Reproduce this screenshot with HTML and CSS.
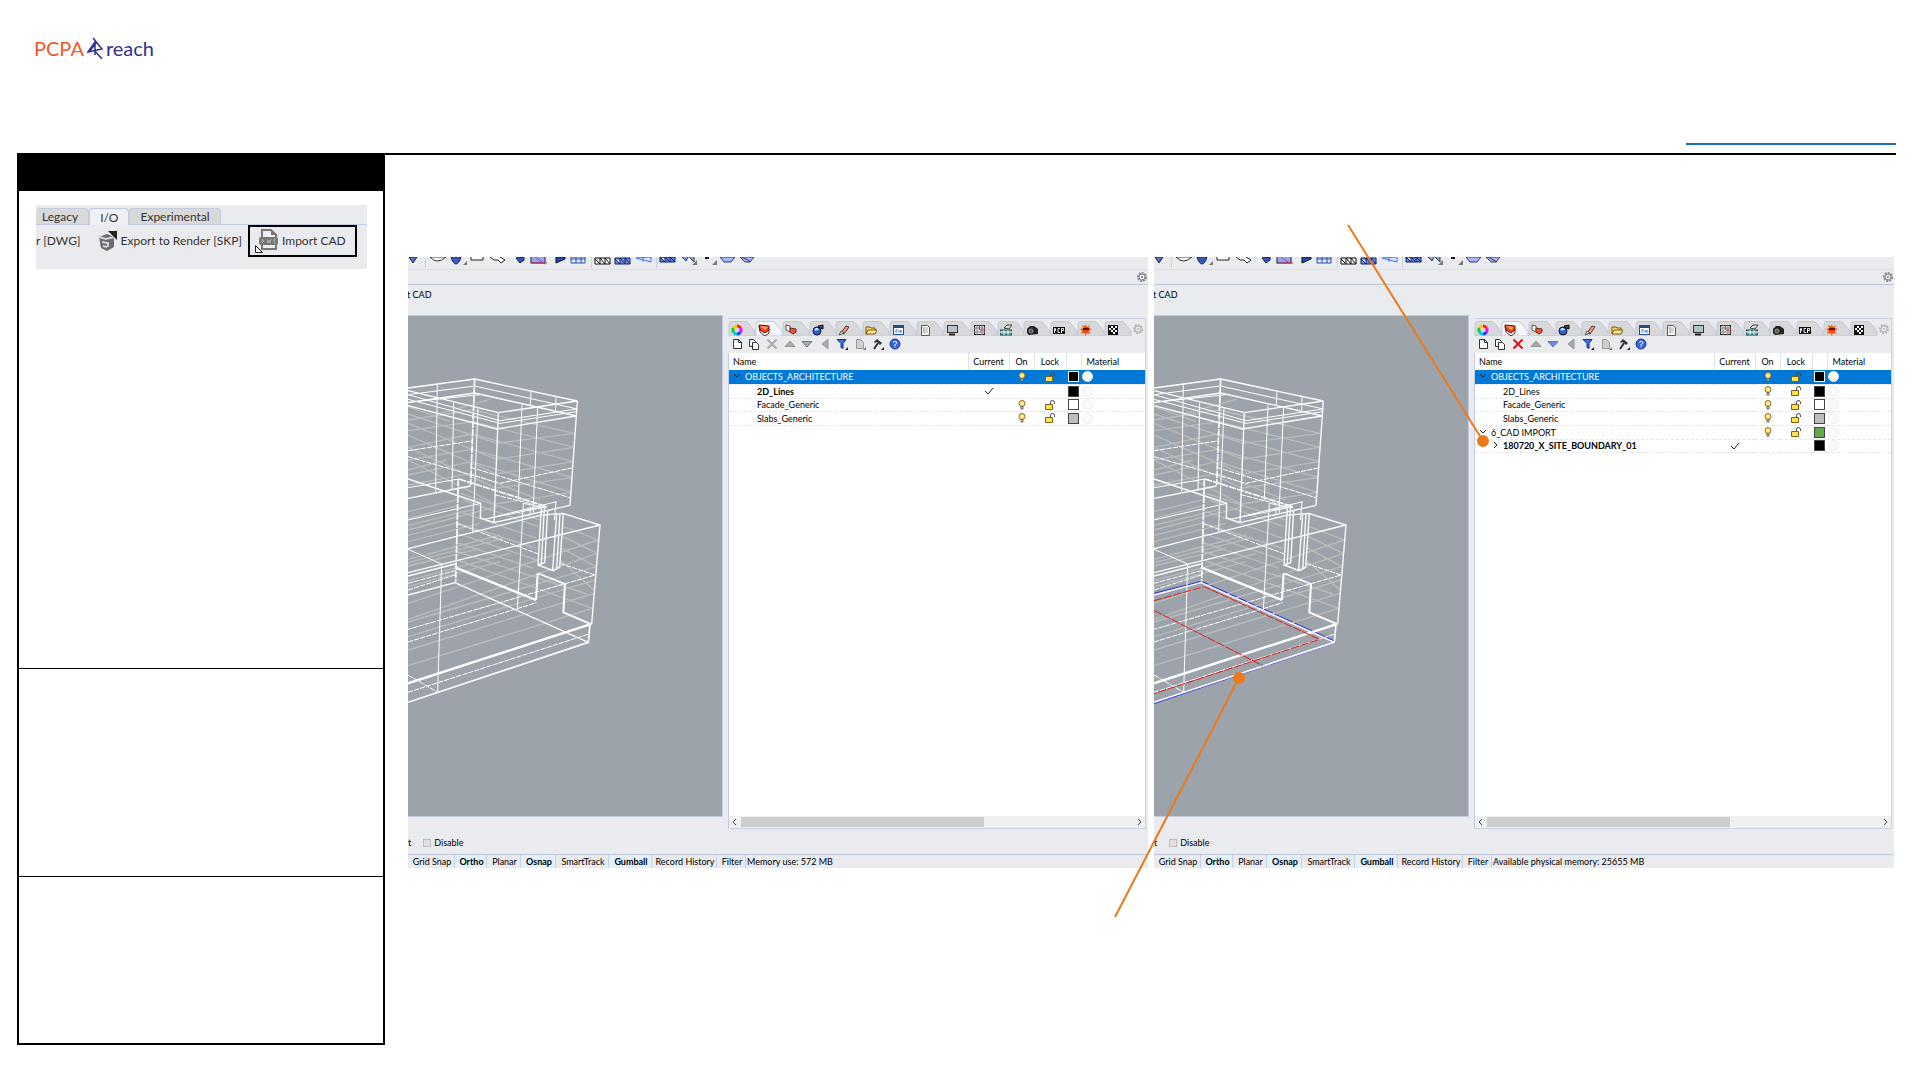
FILE: index.html
```html
<!DOCTYPE html>
<html lang="en">
<head>
<meta charset="utf-8">
<title>PCPA reach – Import CAD</title>
<link rel="stylesheet" href="styles.css">
</head>
<body>
<svg class="defs" aria-hidden="true">
<defs>
<symbol id="wire" viewBox="24 -132 945 1500">
<g fill="none" stroke="#bcbcbc" stroke-width="4">
<path d="M24 180L218 150L522 220M24 212L218 185L522 262M24 262L216 222L520 305M24 300L216 268L518 353M24 345L215 305L515 397M24 375L214 340L420 420"/>
<path d="M24 162L292 250L522 220M24 190L290 298L522 262M24 225L290 342L520 305M24 262L288 384L518 353M24 300L286 432L515 397M120 160L270 118M24 140L150 185M24 330L140 300"/>
<path d="M24 455L175 418M24 476L175 436M24 496L220 448M24 510L290 440M24 526L175 488M24 545L240 490M24 598L300 525M24 608L310 535M24 618L240 566M24 662L330 580M24 680L300 605"/>
<path d="M180 400L420 480M190 420L415 500M180 455L410 535M175 490L410 565M172 520L410 600M172 548L400 625M172 575L560 702M172 600L578 745M490 500L595 540M488 530L592 580M486 565L588 620M480 600L582 690"/>
<path d="M24 730L595 540M24 778L592 580M24 786L588 620M24 830L585 660M24 870L582 700M24 917L578 745"/>
</g>
<g fill="none" stroke="#fff" stroke-width="3">
<path stroke-width="4" d="M24 84L224 57L532 123M24 128L224 99L530 168M24 92L295 158L532 123M24 137L290 207L528 168M295 158L282 488M532 123L510 436M24 415L212 378M24 357L242 430L241 474L282 488L510 436"/>
<path d="M24 104L224 78L532 147M24 104L300 182L530 147M24 118L300 190L530 155M24 127L240 104"/>
<path stroke-width="5" stroke-dasharray="22 3" d="M224 57L212 375M177 357L440 440M175 357L167 665"/>
<path d="M112 70L107 395M161 128L156 390M234 145L222 435M393 92L391 135M468 110L467 150M366 135L355 420M413 140L400 440M220 437L218 520M370 430L352 750M468 425L463 480"/>
<path stroke-dasharray="16 3" d="M24 272L215 243M24 290L300 370L515 324M212 322L510 413M284 404L400 433M170 490L415 582M480 610L585 645L24 808M24 846L410 728M24 997L567 822M24 945L113 997M24 670L165 632M24 690L165 645"/>
<path d="M24 383L177 357M24 480L242 430M252 478L440 440M270 474L470 425M370 430L440 444M370 450L440 440M390 440V462M400 440V458"/>
<path stroke-width="4" d="M24 566L420 466L488 460L600 495L575 792M24 638L600 495M24 648L165 612M24 705L165 668L565 847"/>
<path d="M24 568L125 612L113 997"/>
<path stroke-width="4" d="M424 445L414 615L460 632L479 622L490 460M433 445L424 610M443 450L434 610M470 462L458 630M480 460L470 628M414 615L434 608"/>
<path stroke-width="7" d="M165 622L408 720M24 970L570 793"/>
<path stroke-width="6" d="M408 720L413 640M495 672L490 757L575 793"/>
<path stroke-width="5" d="M413 640L495 672M570 793L565 847L24 1027"/>
</g>
</symbol>
<symbol id="ribbon" viewBox="0 0 228 12">
<g stroke-width="1">
<path d="M1 0h8l-4 6z" fill="#5a70c8" stroke="#223"/>
<path d="M17.500 0v11M183.500 0v11" stroke="#cfd3de"/>
<path d="M22 0q7 8 16 0z" fill="#fff" stroke="#333"/>
<path d="M43 0h10q-2 7-5 7t-5-7z" fill="#3b57b5" stroke="#1c2a66"/>
<path d="M59 4v4h-4z" fill="#777"/>
<path d="M63 0v3h12V0M82 0l4 3h4l3 3 4-3-5-3" fill="#fff" stroke="#222"/>
<path d="M108 1l4 5 4-3V0z" fill="#3452c0" stroke="#161e40"/>
<rect x="123" y="-5" width="14" height="11" fill="#98a4f2" stroke="#222"/><path d="M123 6h16M127 0l10 7" stroke="#c33b70"/>
<path d="M148 0v6l9-4V0z" fill="#2947b8" stroke="#111"/>
<path d="M163 0h14v6h-14zM163 2h14M168 0v6M173 0v6" fill="#dfe8ff" stroke="#2553a5"/>
<path d="M187 1h15v6h-15zM187 2l5 5V1l5 6V1l5 6" fill="#fff" stroke="#111"/>
<path d="M207 1h15v6h-15zM207 2l5 5V1l5 6V1l5 6" fill="#6f93f5" stroke="#10205c"/>
</g>
</symbol>
<symbol id="ribbon-end" viewBox="0 0 128 12">
<path d="M0 1l15 4V0zM7 0v5" fill="#d6e2ff" stroke="#4b76e2"/>
<path d="M20.500 0v11" stroke="#cfd3de"/>
<path d="M24 0h15v5H24zM24 0l5 5V0l5 5V0l5 5" fill="#5f83e8" stroke="#10205c"/>
<path d="M46 0l4 4 2-4M53 0l5 5V0" fill="#7f9af0" stroke="#345"/>
<path d="M61 3v5h-5zM81 3v5h-5z" fill="#777"/><path d="M69 1h4" stroke="#111" stroke-width="2"/>
<path d="M84 0l4 5h7l4-5zM104 0l5 5h5l4-5z" fill="#a9b6ff" stroke="#333a66"/><path d="M106 0l9 5" stroke="#333a66"/>
</symbol>
<symbol id="gear" viewBox="0 0 12 12"><circle cx="6" cy="6" r="4" fill="none" stroke="currentColor" stroke-width="2" stroke-dasharray="2 1"/><circle cx="6" cy="6" r="3" fill="none" stroke="currentColor"/><circle cx="6" cy="6" r="1" fill="currentColor"/></symbol>
<symbol id="t-wheel" viewBox="0 0 12 12"><g fill="none" stroke-width="3"><path stroke="#f22" d="M6 2A4 4 0 0 1 9.500 4"/><path stroke="#f0f" d="M9.500 4A4 4 0 0 1 9.500 8"/><path stroke="#33f" d="M9.500 8A4 4 0 0 1 6 10"/><path stroke="#0cd" d="M6 10A4 4 0 0 1 2.500 8"/><path stroke="#1c2" d="M2.500 8A4 4 0 0 1 2.500 4"/><path stroke="#fc0" d="M2.500 4A4 4 0 0 1 6 2"/></g></symbol>
<symbol id="t-layers" viewBox="0 0 12 12"><path d="M1 2l1 6 5 4 4-3V5L7 8z" fill="#fff" stroke="#333"/><path d="M1 1l10 1v4L7 9 2 6z" fill="#f0441c" stroke="#611"/><path d="M2 2l8 1-3 3z" fill="#ff9f66"/></symbol>
<symbol id="t-object" viewBox="0 0 12 12"><path d="M1 1l4 1v6l-4-2z" fill="#fff" stroke="#555"/><path d="M5 4l6 1v3l-3 2-3-2z" fill="#ee5a30" stroke="#722"/></symbol>
<symbol id="t-env" viewBox="0 0 12 12"><circle cx="5" cy="7" r="4" fill="#2c5fd0" stroke="#112"/><path d="M3 6q2-2 3 0" stroke="#dff" stroke-width="2" fill="none"/><path d="M6 2l5-1v4L8 4z" fill="#345" stroke="#111"/></symbol>
<symbol id="t-brush" viewBox="0 0 12 12"><path d="M3 9l5-7 3 1-5 7z" fill="#f49b70" stroke="#533"/><path d="M1 11l2-4 3 2z" fill="#eee" stroke="#555"/></symbol>
<symbol id="t-folder" viewBox="0 0 12 12"><path d="M1 10V3h4l1 1h4v2" fill="#ffd75e" stroke="#765212"/><path d="M1 10l2-4h9l-2 4z" fill="#ffe995" stroke="#765212"/></symbol>
<symbol id="t-browser" viewBox="0 0 12 12"><rect x="1.500" y="1.500" width="10" height="9" fill="#fff" stroke="#234b96"/><path d="M1 3h11" stroke="#234b96" stroke-width="2"/><path d="M4 9V6q0-1 1.500 0T7 8t2-2v3" fill="none" stroke="#3c70e8"/></symbol>
<symbol id="t-doc" viewBox="0 0 12 12"><path d="M2.500 1.500h6l2 2v8h-8z" fill="#fff" stroke="#555"/><path d="M4 4h5M4 6h5M4 8h5M5 3v7" stroke="#aaa"/></symbol>
<symbol id="t-display" viewBox="0 0 12 12"><rect x="1.500" y="1.500" width="10" height="7" fill="#b9c2c8" stroke="#333"/><path d="M3 10.500h6" stroke="#222" stroke-width="2"/></symbol>
<symbol id="t-grid" viewBox="0 0 12 12"><rect x="1.500" y="1.500" width="10" height="9" fill="#d9e0d9" stroke="#222"/><path d="M1 4h11M1 8h11M4 1v10M9 1v10" stroke="#889"/><path d="M7 6h5" stroke="#d33"/><path d="M6.500 1v5" stroke="#393"/></symbol>
<symbol id="t-plane" viewBox="0 0 12 12"><path d="M0 6h12v5H0z" fill="#62a69b" stroke="#245"/><path d="M0 8h12M4 6v5M8 6v5" stroke="#dff"/><path d="M4 4l3-3h5l-3 4z" fill="#ddd" stroke="#444"/></symbol>
<symbol id="t-camera" viewBox="0 0 12 12"><path d="M1 5l3-3h4l4 3v5l-9 1-2-2z" fill="#222"/><circle cx="5" cy="7" r="2" fill="#555" stroke="#999"/></symbol>
<symbol id="t-rcp" viewBox="0 0 12 12"><path d="M0 3h12v7H0z" fill="#111"/><path d="M1.500 9V4.500h1v2h-1M7 4.500H5v4h2M8.500 9V4.500h2v2h-2" fill="none" stroke="#eee"/></symbol>
<symbol id="t-sun" viewBox="0 0 12 12"><path d="M6 0l1 3 3-2-1 3 3 1-3 2 2 3-4-1-1 3-2-3-3 1 1-3-2-2 3-1-1-3 3 1z" fill="#e96b1a"/><circle cx="6" cy="6" r="3" fill="#f0401c"/><path d="M3 5h6" stroke="#611" stroke-width="2"/></symbol>
<symbol id="t-check" viewBox="0 0 12 12"><path d="M1 1h10v10H1z" fill="#111"/><path d="M4 2h2v2H4zM8 2h2v2H8zM6 4h2v2H6zM4 6h2v2H4zM2 4h2v2H2zM8 6h2v2H8zM6 8h2v2H6z" fill="#fff"/></symbol>
<symbol id="b-new" viewBox="0 0 12 12"><path d="M2.500 1.500h5l3 3v6h-8z" fill="#fff" stroke="#333"/><path d="M7.500 1v3.500H11" fill="none" stroke="#333"/></symbol>
<symbol id="b-copy" viewBox="0 0 12 12"><path d="M1.500 1.500h4l2 2v5h-6z" fill="#fff" stroke="#333"/><path d="M4.500 4.500h4l2 2v5h-6z" fill="#fff" stroke="#333"/></symbol>
<symbol id="b-x" viewBox="0 0 12 12"><path d="M1.500 1.500l9 9M10.500 1.500l-9 9" stroke="currentColor" stroke-width="2"/></symbol>
<symbol id="b-up" viewBox="0 0 12 12"><path d="M1 8.500L6 3l5 5.500z" fill="#aaa" stroke="#999"/></symbol>
<symbol id="b-down" viewBox="0 0 12 12"><path d="M1 3.500L6 9l5-5.500z" fill="currentColor" stroke="#777"/></symbol>
<symbol id="b-left" viewBox="0 0 12 12"><path d="M9 1L3 6l6 5z" fill="#aaa" stroke="#999"/></symbol>
<symbol id="b-filter" viewBox="0 0 12 12"><path d="M1 1.500h9l-3 4v5l-2-1v-4z" fill="#3d6fe0" stroke="#1b2f75"/><path d="M12 9v3H9z" fill="#222"/></symbol>
<symbol id="b-page" viewBox="0 0 12 12"><path d="M2.500 1.500h4l3 3v6h-7z" fill="#d0d0d0" stroke="#999"/><path d="M12 9v3H9z" fill="#777"/></symbol>
<symbol id="b-hammer" viewBox="0 0 12 12"><path d="M2 4l3-3 5 4-2 2-3-3-2 1z" fill="#333"/><path d="M6 5l-4 6" stroke="#333" stroke-width="2"/><path d="M12 9v3H9z" fill="#222"/></symbol>
<symbol id="b-help" viewBox="0 0 12 12"><circle cx="6" cy="6" r="5" fill="#3565d8" stroke="#1d3c99"/><path d="M4 4.500q2-2.500 4 0Q8 6 6 6.500V8" fill="none" stroke="#fff"/><path d="M6 8.500v1" stroke="#fff"/></symbol>
<symbol id="bulb" viewBox="0 0 8 10"><circle cx="4" cy="3.500" r="3" fill="#ffe78a" stroke="#8a6a1c"/><path d="M3 6.500h2V9H3z" fill="#ddd" stroke="#665"/></symbol>
<symbol id="lock" viewBox="0 0 10 10"><path d="M5.500 5V2.500Q5.500 .5 7.500 .5T9.500 2.500V4" fill="none" stroke="#444"/><path d="M.5 4.500h7v5h-7z" fill="#ffe14d" stroke="#7a6212"/></symbol>
<symbol id="tick" viewBox="0 0 10 8"><path d="M1 4l3 3 5-6" fill="none" stroke="#222"/></symbol>
<symbol id="open" viewBox="0 0 6 6"><path d="M0 1l3 3 3-3" fill="none" stroke="currentColor"/></symbol>
<symbol id="closed" viewBox="0 0 6 6"><path d="M2 0l3 3-3 3" fill="none" stroke="currentColor"/></symbol>
<symbol id="layertabs" viewBox="0 0 27 15"><path d="M.5 15V3Q.5 .5 3 .5H17Q19 .5 20.500 3L26.500 10V15z" fill="currentColor" stroke="#c0c8dc"/></symbol>
</defs>
</svg>

<header class="masthead">
  <div class="brand">
    <span class="brand-pcpa">PCPA</span>
    <svg class="brand-mark" viewBox="0 0 16 22"><path d="M6 1L15 12L1 15L8 5V18M2 15L9 6M7 13l8 9" fill="none" stroke="#2e3191" stroke-width="1.500"/></svg>
    <span class="brand-reach">reach</span>
  </div>
  <a class="top-link" href="#" aria-label="Open link"></a>
</header>

<div class="sheet">
  <aside class="side">
    <div class="side-title"></div>
    <section class="side-tool">
      <div class="snippet">
        <div class="snip-tabs"><button class="snip-tab">Legacy</button><button class="snip-tab active">I/O</button><button class="snip-tab">Experimental</button></div>
        <div class="snip-row">
          <button class="snip-btn first">r [DWG]</button>
          <button class="snip-btn export"><svg width="21" height="22" viewBox="0 0 21 22"><path d="M2 7l8-3 7 3v10l-7 4-6-3z" fill="#6d6d6f"/><path d="M2 7l7 2 8-2M5 12l6 1v4M6 16l4 1" stroke="#d5d5d8" stroke-width="2" fill="none"/><path d="M11 1h9v9z" fill="#222"/></svg>Export to Render [SKP]</button>
          <button class="snip-btn import"><svg width="24" height="26" viewBox="0 0 24 26"><path d="M8 2h9l5 5v14H8z" fill="#eee" stroke="#777" stroke-width="2"/><path d="M17 2v5h5z" fill="#777"/><rect x="5" y="9" width="19" height="8" rx="2" fill="#777"/><path d="M8 11v4l2-2zM13 11l1 4 1-3 1 3 1-4M22 11h-2v4h2" fill="none" stroke="#aaa"/><path d="M1.500 17.500v7h7z" fill="#fff" stroke="#222"/></svg>Import CAD</button>
        </div>
      </div>
    </section>
    <section class="side-mid"></section>
    <section class="side-end"></section>
  </aside>

  <main class="shots">
    <figure class="shot">
      <div class="ribbon"><svg width="228" height="12"><use href="#ribbon"/></svg><svg width="128" height="12"><use href="#ribbon-end"/></svg></div>
      <div class="options"><svg width="12" height="12"><use href="#gear"/></svg></div>
      <div class="command">t CAD</div>
      <div class="work">
        <div class="viewport"><svg width="315" height="500"><use href="#wire"/></svg></div>
        <div class="panel">
          <div class="tabs">
            <button class="tab"><svg class="shape"><use href="#layertabs"/></svg><svg class="ico"><use href="#t-wheel"/></svg></button>
            <button class="tab active"><svg class="shape"><use href="#layertabs"/></svg><svg class="ico"><use href="#t-layers"/></svg></button>
            <button class="tab"><svg class="shape"><use href="#layertabs"/></svg><svg class="ico"><use href="#t-object"/></svg></button>
            <button class="tab"><svg class="shape"><use href="#layertabs"/></svg><svg class="ico"><use href="#t-env"/></svg></button>
            <button class="tab"><svg class="shape"><use href="#layertabs"/></svg><svg class="ico"><use href="#t-brush"/></svg></button>
            <button class="tab"><svg class="shape"><use href="#layertabs"/></svg><svg class="ico"><use href="#t-folder"/></svg></button>
            <button class="tab"><svg class="shape"><use href="#layertabs"/></svg><svg class="ico"><use href="#t-browser"/></svg></button>
            <button class="tab"><svg class="shape"><use href="#layertabs"/></svg><svg class="ico"><use href="#t-doc"/></svg></button>
            <button class="tab"><svg class="shape"><use href="#layertabs"/></svg><svg class="ico"><use href="#t-display"/></svg></button>
            <button class="tab"><svg class="shape"><use href="#layertabs"/></svg><svg class="ico"><use href="#t-grid"/></svg></button>
            <button class="tab"><svg class="shape"><use href="#layertabs"/></svg><svg class="ico"><use href="#t-plane"/></svg></button>
            <button class="tab"><svg class="shape"><use href="#layertabs"/></svg><svg class="ico"><use href="#t-camera"/></svg></button>
            <button class="tab"><svg class="shape"><use href="#layertabs"/></svg><svg class="ico"><use href="#t-rcp"/></svg></button>
            <button class="tab"><svg class="shape"><use href="#layertabs"/></svg><svg class="ico"><use href="#t-sun"/></svg></button>
            <button class="tab"><svg class="shape"><use href="#layertabs"/></svg><svg class="ico"><use href="#t-check"/></svg></button>
            <svg class="tab-gear"><use href="#gear"/></svg>
          </div>
          <div class="tools">
            <button class="tool"><svg><use href="#b-new"/></svg></button><button class="tool"><svg><use href="#b-copy"/></svg></button><button class="tool off"><svg><use href="#b-x"/></svg></button><button class="tool"><svg><use href="#b-up"/></svg></button><button class="tool off"><svg><use href="#b-down"/></svg></button><button class="tool"><svg><use href="#b-left"/></svg></button><button class="tool"><svg><use href="#b-filter"/></svg></button><button class="tool"><svg><use href="#b-page"/></svg></button><button class="tool"><svg><use href="#b-hammer"/></svg></button><button class="tool"><svg><use href="#b-help"/></svg></button>
          </div>
          <div class="list">
            <table class="layers">
              <thead><tr><th class="c-name">Name</th><th class="c-cur">Current</th><th class="c-on">On</th><th class="c-lock">Lock</th><th class="c-col"></th><th class="c-mat">Material</th></tr></thead>
              <tbody>
                <tr class="selected"><td class="root"><svg class="twist"><use href="#open"/></svg>OBJECTS_ARCHITECTURE</td><td></td><td><svg class="bulb"><use href="#bulb"/></svg></td><td><svg class="lock"><use href="#lock"/></svg></td><td><i class="swatch black"></i></td><td><i class="ball"></i></td></tr>
                <tr class="current"><td class="child">2D_Lines</td><td><svg class="tick"><use href="#tick"/></svg></td><td></td><td></td><td><i class="swatch black"></i></td><td><i class="ball"></i></td></tr>
                <tr><td class="child">Facade_Generic</td><td></td><td><svg class="bulb"><use href="#bulb"/></svg></td><td><svg class="lock"><use href="#lock"/></svg></td><td><i class="swatch"></i></td><td><i class="ball"></i></td></tr>
                <tr><td class="child">Slabs_Generic</td><td></td><td><svg class="bulb"><use href="#bulb"/></svg></td><td><svg class="lock"><use href="#lock"/></svg></td><td><i class="swatch gray"></i></td><td><i class="ball"></i></td></tr>
              </tbody>
            </table>
          </div>
          <div class="scroll"><svg class="arrow left"><use href="#closed"/></svg><div class="track"><div class="thumb"></div></div><svg class="arrow"><use href="#closed"/></svg></div>
        </div>
      </div>
      <div class="osnap"><span>t</span><label class="disable"><input type="checkbox">Disable</label></div>
      <div class="status"><button class="mode">Grid Snap</button><button class="mode on">Ortho</button><button class="mode">Planar</button><button class="mode on">Osnap</button><button class="mode">SmartTrack</button><button class="mode on">Gumball</button><button class="mode">Record History</button><button class="mode">Filter</button><span class="memory">Memory use: 572 MB</span></div>
    </figure>

    <figure class="shot">
      <div class="ribbon"><svg width="228" height="12"><use href="#ribbon"/></svg><svg width="128" height="12"><use href="#ribbon-end"/></svg></div>
      <div class="options"><svg width="12" height="12"><use href="#gear"/></svg></div>
      <div class="command">t CAD</div>
      <div class="work">
        <div class="viewport"><svg width="315" height="500" viewBox="24 -132 945 1500"><g fill="none" stroke-width="3"><path stroke="#2a2af0" d="M24 700L167 664L568 844"/><path stroke="#2a2af0" stroke-width="4" d="M568 847L24 1030"/></g><use href="#wire" x="24" y="-132" width="945" height="1500"/><path fill="none" stroke-width="3" stroke="#e21b1b" stroke-dasharray="26 4" d="M24 722L175 680L520 838L24 1001M24 751L350 917"/></svg></div>
        <div class="panel">
          <div class="tabs">
            <button class="tab"><svg class="shape"><use href="#layertabs"/></svg><svg class="ico"><use href="#t-wheel"/></svg></button>
            <button class="tab active"><svg class="shape"><use href="#layertabs"/></svg><svg class="ico"><use href="#t-layers"/></svg></button>
            <button class="tab"><svg class="shape"><use href="#layertabs"/></svg><svg class="ico"><use href="#t-object"/></svg></button>
            <button class="tab"><svg class="shape"><use href="#layertabs"/></svg><svg class="ico"><use href="#t-env"/></svg></button>
            <button class="tab"><svg class="shape"><use href="#layertabs"/></svg><svg class="ico"><use href="#t-brush"/></svg></button>
            <button class="tab"><svg class="shape"><use href="#layertabs"/></svg><svg class="ico"><use href="#t-folder"/></svg></button>
            <button class="tab"><svg class="shape"><use href="#layertabs"/></svg><svg class="ico"><use href="#t-browser"/></svg></button>
            <button class="tab"><svg class="shape"><use href="#layertabs"/></svg><svg class="ico"><use href="#t-doc"/></svg></button>
            <button class="tab"><svg class="shape"><use href="#layertabs"/></svg><svg class="ico"><use href="#t-display"/></svg></button>
            <button class="tab"><svg class="shape"><use href="#layertabs"/></svg><svg class="ico"><use href="#t-grid"/></svg></button>
            <button class="tab"><svg class="shape"><use href="#layertabs"/></svg><svg class="ico"><use href="#t-plane"/></svg></button>
            <button class="tab"><svg class="shape"><use href="#layertabs"/></svg><svg class="ico"><use href="#t-camera"/></svg></button>
            <button class="tab"><svg class="shape"><use href="#layertabs"/></svg><svg class="ico"><use href="#t-rcp"/></svg></button>
            <button class="tab"><svg class="shape"><use href="#layertabs"/></svg><svg class="ico"><use href="#t-sun"/></svg></button>
            <button class="tab"><svg class="shape"><use href="#layertabs"/></svg><svg class="ico"><use href="#t-check"/></svg></button>
            <svg class="tab-gear"><use href="#gear"/></svg>
          </div>
          <div class="tools">
            <button class="tool"><svg><use href="#b-new"/></svg></button><button class="tool"><svg><use href="#b-copy"/></svg></button><button class="tool delete"><svg><use href="#b-x"/></svg></button><button class="tool"><svg><use href="#b-up"/></svg></button><button class="tool down"><svg><use href="#b-down"/></svg></button><button class="tool"><svg><use href="#b-left"/></svg></button><button class="tool"><svg><use href="#b-filter"/></svg></button><button class="tool"><svg><use href="#b-page"/></svg></button><button class="tool"><svg><use href="#b-hammer"/></svg></button><button class="tool"><svg><use href="#b-help"/></svg></button>
          </div>
          <div class="list">
            <table class="layers">
              <thead><tr><th class="c-name">Name</th><th class="c-cur">Current</th><th class="c-on">On</th><th class="c-lock">Lock</th><th class="c-col"></th><th class="c-mat">Material</th></tr></thead>
              <tbody>
                <tr class="selected"><td class="root"><svg class="twist"><use href="#open"/></svg>OBJECTS_ARCHITECTURE</td><td></td><td><svg class="bulb"><use href="#bulb"/></svg></td><td><svg class="lock"><use href="#lock"/></svg></td><td><i class="swatch black"></i></td><td><i class="ball"></i></td></tr>
                <tr><td class="child">2D_Lines</td><td></td><td><svg class="bulb"><use href="#bulb"/></svg></td><td><svg class="lock"><use href="#lock"/></svg></td><td><i class="swatch black"></i></td><td><i class="ball"></i></td></tr>
                <tr><td class="child">Facade_Generic</td><td></td><td><svg class="bulb"><use href="#bulb"/></svg></td><td><svg class="lock"><use href="#lock"/></svg></td><td><i class="swatch"></i></td><td><i class="ball"></i></td></tr>
                <tr><td class="child">Slabs_Generic</td><td></td><td><svg class="bulb"><use href="#bulb"/></svg></td><td><svg class="lock"><use href="#lock"/></svg></td><td><i class="swatch gray"></i></td><td><i class="ball"></i></td></tr>
                <tr><td class="root"><svg class="twist"><use href="#open"/></svg>6_CAD IMPORT</td><td></td><td><svg class="bulb"><use href="#bulb"/></svg></td><td><svg class="lock"><use href="#lock"/></svg></td><td><i class="swatch green"></i></td><td><i class="ball"></i></td></tr>
                <tr class="current"><td class="nested"><svg class="twist"><use href="#closed"/></svg>180720_X_SITE_BOUNDARY_01</td><td><svg class="tick"><use href="#tick"/></svg></td><td></td><td></td><td><i class="swatch black"></i></td><td><i class="ball"></i></td></tr>
              </tbody>
            </table>
          </div>
          <div class="scroll"><svg class="arrow left"><use href="#closed"/></svg><div class="track"><div class="thumb"></div></div><svg class="arrow"><use href="#closed"/></svg></div>
        </div>
      </div>
      <div class="osnap"><span>t</span><label class="disable"><input type="checkbox">Disable</label></div>
      <div class="status"><button class="mode">Grid Snap</button><button class="mode on">Ortho</button><button class="mode">Planar</button><button class="mode on">Osnap</button><button class="mode">SmartTrack</button><button class="mode on">Gumball</button><button class="mode">Record History</button><button class="mode">Filter</button><span class="memory">Available physical memory: 25655 MB</span></div>
      <svg class="callouts" viewBox="0 0 400 611"><g stroke="#ec7a1c" stroke-width="2" fill="#ec7a1c"><path d="M194-32L329 184M-39 660L85 421"/><circle cx="329" cy="184" r="5"/><circle cx="85" cy="421" r="5"/></g></svg>
    </figure>
  </main>
</div>
</body>
</html>
```
FILE: styles.css
```css
* { box-sizing: border-box; }
body { margin: 0; background: #fff; color: #000; font-family: Lato, "Noto Sans", sans-serif; font-size: 9px; line-height: 12px; }
svg { display: block; flex: none; }
button { margin: 0; padding: 0; border: 0; background: none; color: inherit; font: inherit; white-space: nowrap; }
.defs { position: absolute; width: 0; height: 0; }

.masthead { display: flex; justify-content: space-between; align-items: flex-start; height: 153px; padding: 35px 24px 0 34px; }
.brand { display: flex; align-items: center; gap: 3px; height: 26px; font-size: 20px; line-height: 26px; }
.brand-pcpa { color: #ee5a2c; }
.brand-mark { width: 16px; height: 22px; }
.brand-reach { color: #2e3191; }
.top-link { width: 210px; height: 110px; border-bottom: 2px solid #1a6fc4; }

.sheet { display: flex; align-items: flex-start; margin: 0 24px 24px 17px; border-top: 2px solid #000; }
.side { flex: none; width: 368px; border: 2px solid #000; border-top: 0; }
.side-title { height: 36px; background: #000; }
.side-tool { height: 477px; padding: 14px 16px 0 17px; }
.side-mid { height: 208px; border-top: 1px solid #000; }
.side-end { height: 167px; border-top: 1px solid #000; }
.snippet { height: 64px; padding-top: 3px; background: #eaebef; color: #333; font-size: 12px; line-height: 16px; overflow: hidden; }
.snip-tabs { display: flex; height: 17px; border-bottom: 1px solid #c3cbe0; }
.snip-tab { height: 16px; padding: 0 10px; border: 1px solid #c3cbe0; border-bottom: 0; border-radius: 4px 4px 0 0; background: #d9d9da; line-height: 15px; }
.snip-tab:first-child { padding: 0 10px 0 6px; border-left: 0; }
.snip-tab.active { height: 17px; background: #eff0f5; }
.snip-row { display: flex; align-items: center; height: 32px; }
.snip-btn { display: flex; align-items: center; gap: 3px; }
.snip-btn.export { margin-left: 16px; }
.snip-btn.import { gap: 4px; width: 109px; height: 32px; margin-left: auto; margin-right: 10px; padding-left: 4px; border: 2px solid #000; }

.shots { flex: 1; display: grid; grid-template-columns: 1fr 1fr; gap: 6px; padding: 102px 2px 0 23px; min-width: 0; }
.shot { position: relative; margin: 0; min-width: 0; background: #eaebef; }
.ribbon { display: flex; height: 13px; border-bottom: 1px solid #dcdfe8; }
.options { display: flex; justify-content: flex-end; height: 15px; padding-top: 1px; border-bottom: 1px solid #bcc5da; color: #888; }
.command { height: 30px; padding-top: 4px; text-indent: -1px; overflow: hidden; }
.work { display: flex; }
.viewport { flex: none; width: 315px; height: 502px; border: solid #c3cbe0; border-width: 1px 1px 1px 0; background: #9ca3ab; overflow: hidden; }
.panel { flex: 1; display: flex; flex-direction: column; min-width: 0; height: 511px; margin: 3px 2px 0 5px; border: solid #c9d1e2; border-width: 1px 1px 1px 0; }
.tabs { display: flex; height: 17px; padding-top: 2px; overflow: hidden; }
.tab { position: relative; flex: 1; min-width: 0; height: 15px; color: #d8d8da; }
.tab.active { color: #f5f6fa; }
.tab .shape { position: absolute; top: 0; left: 0; width: 28px; height: 15px; }
.tab .ico { position: relative; width: 12px; height: 12px; margin: 2px 0 0 3px; }
.tab-gear { width: 14px; height: 12px; margin-top: 2px; color: #b5b5b5; }
.tools { display: flex; width: 176px; height: 17px; }
.tool { flex: 1; display: flex; justify-content: center; padding-top: 2px; min-width: 0; }
.tool svg { width: 12px; height: 12px; }
.off { color: #aaa; }
.delete { color: #d5151c; }
.down { color: #6a8cf5; }
.list { flex: 1; border-left: 1px solid #c3cbe0; background: #fff; }
.layers { width: 100%; border-collapse: collapse; table-layout: fixed; }
.layers th { height: 17px; padding: 0; border-right: 1px solid #e3e3e6; font-weight: 400; text-align: center; line-height: 16px; }
.layers .c-name { width: 239px; padding-left: 4px; text-align: left; }
.layers .c-cur { width: 41px; }
.layers .c-on { width: 25px; }
.layers .c-lock { width: 32px; }
.layers .c-col { width: 15px; }
.layers .c-mat { padding-left: 5px; border-right: 0; text-align: left; }
.layers td { height: 14px; padding: 0; border-bottom: 1px dashed #e6e6e8; line-height: 13px; white-space: nowrap; }
.layers tr:nth-child(3n) td { height: 13px; line-height: 12px; }
.layers td > svg { margin: 0 auto; }
.layers .root { padding-left: 5px; }
.layers .child { padding-left: 28px; }
.layers .nested { padding-left: 17px; }
.layers td > .twist { display: inline-block; width: 6px; height: 6px; margin: 0 5px 0 0; vertical-align: 1px; color: #222; }
.layers .selected { background: #0078d7; color: #fff; }
.current { font-weight: 700; }
.bulb { width: 8px; height: 10px; }
.lock { width: 10px; height: 10px; }
.tick { width: 10px; height: 8px; }
.swatch { display: block; width: 11px; height: 11px; margin: 0 auto; border: 1px solid #444; background: #fff; }
.selected .swatch { border-color: #fff; }
.swatch.black { background: #000; }
.swatch.gray { background: #bdbdbd; }
.swatch.green { background: #62a84e; }
.ball { display: block; width: 11px; height: 11px; margin-left: 1px; border: 1px solid #eee; border-radius: 50%; background: #fafafa; }
.scroll { display: flex; align-items: center; height: 12px; border-left: 1px solid #c3cbe0; background: #f0f0f0; color: #444; }
.arrow { width: 6px; height: 6px; margin: 0 3px; }
.arrow.left { transform: rotate(180deg); }
.track { flex: 1; height: 10px; }
.thumb { width: 62%; height: 10px; background: #cdcdcd; }
.osnap { display: flex; align-items: center; gap: 12px; height: 25px; padding-top: 2px; }
.disable { display: flex; align-items: center; gap: 3px; }
.disable input { appearance: none; width: 8px; height: 8px; margin: 0; border: 1px solid #bbb; background: #dfdfdf; }
.status { display: grid; grid-template-columns: 47px 32px 34px 35px 53px 43px 65px 29px 1fr; height: 14px; border-top: 1px solid #bcc5da; line-height: 13px; overflow: hidden; }
.mode { padding-left: 2px; border-right: 1px solid #c9d1e2; overflow: hidden; }
.mode.on { background: #e2f1fc; font-weight: 700; }
.memory { padding-left: 1px; white-space: nowrap; }
.callouts { position: absolute; top: 0; left: 0; width: 400px; height: 611px; overflow: visible; pointer-events: none; }
```
